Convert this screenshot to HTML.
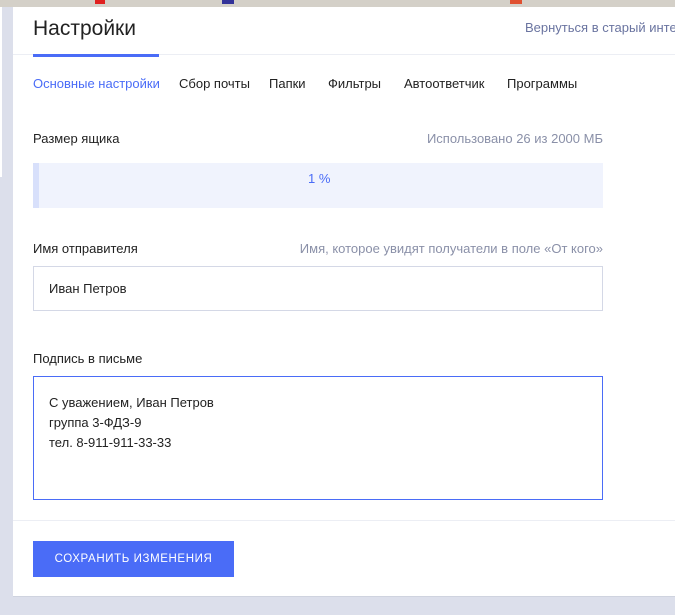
<!DOCTYPE html>
<html><head><meta charset="utf-8"><style>
*{margin:0;padding:0;box-sizing:border-box}
body{width:675px;height:615px;background:#dcdfeb;position:relative;overflow:hidden;font-family:"Liberation Sans",sans-serif;color:#222}
.top{position:absolute;left:0;top:0;width:675px;height:7px;background:#d4d0c8}
.lw{position:absolute;left:0;top:7px;width:2px;height:170px;background:#fff}
.panel{position:absolute;left:13px;top:7px;width:662px;height:590px;background:#fff;border-bottom:1px solid #cfd3df}
.a{position:absolute;white-space:nowrap}
</style></head><body>
<div class="top"></div>
<div style="position:absolute;left:95px;top:0;width:10px;height:4px;background:#e02020"></div>
<div style="position:absolute;left:222px;top:0;width:12px;height:4px;background:#333399"></div>
<div style="position:absolute;left:510px;top:0;width:12px;height:4px;background:#e05030"></div>
<div class="lw"></div>
<div class="panel">
<div class="a" style="left:20px;top:10px;font-size:21px;color:#222">Настройки</div>
<div class="a" style="left:512px;top:13px;font-size:13px;color:#6a74a0">Вернуться в старый инте</div>
<div class="a" style="left:0;top:47px;width:662px;height:1px;background:#eceef4"></div>
<div class="a" style="left:20px;top:47px;width:126px;height:3px;background:#4a6cf7"></div>
<div class="a" style="left:20px;top:69px;font-size:13px;color:#4a6cf7">Основные настройки</div>
<div class="a" style="left:166px;top:69px;font-size:13px">Сбор почты</div>
<div class="a" style="left:256px;top:69px;font-size:13px">Папки</div>
<div class="a" style="left:315px;top:69px;font-size:13px">Фильтры</div>
<div class="a" style="left:391px;top:69px;font-size:13px">Автоответчик</div>
<div class="a" style="left:494px;top:69px;font-size:13px">Программы</div>
<div class="a" style="left:20px;top:124px;font-size:13px">Размер ящика</div>
<div class="a" style="right:72px;top:124px;font-size:13px;color:#8a90a8">Использовано 26 из 2000 МБ</div>
<div class="a" style="left:20px;top:156px;width:570px;height:45px;background:#f0f3fd;border-left:6px solid #d8e0fb"></div>
<div class="a" style="left:295px;top:164px;font-size:13px;color:#4a6cf7">1 %</div>
<div class="a" style="left:20px;top:234px;font-size:13px">Имя отправителя</div>
<div class="a" style="right:72px;top:234px;font-size:13px;color:#8a90a8">Имя, которое увидят получатели в поле «От кого»</div>
<div class="a" style="left:20px;top:259px;width:570px;height:45px;border:1px solid #d4d8e6"></div>
<div class="a" style="left:36px;top:274px;font-size:13px">Иван Петров</div>
<div class="a" style="left:20px;top:344px;font-size:13px">Подпись в письме</div>
<div class="a" style="left:20px;top:369px;width:570px;height:124px;border:1px solid #4a6cf7"></div>
<div class="a" style="left:36px;top:386px;font-size:13px;line-height:20px">С уважением, Иван Петров<br>группа 3-ФДЗ-9<br>тел. 8-911-911-33-33</div>
<div class="a" style="left:0;top:513px;width:662px;height:1px;background:#eceef4"></div>
<div class="a" style="left:20px;top:534px;width:201px;height:36px;background:#4a6cf7;color:#fff;font-size:11.5px;letter-spacing:0.6px;text-align:center;line-height:36px">СОХРАНИТЬ ИЗМЕНЕНИЯ</div>
</div>
</body></html>
